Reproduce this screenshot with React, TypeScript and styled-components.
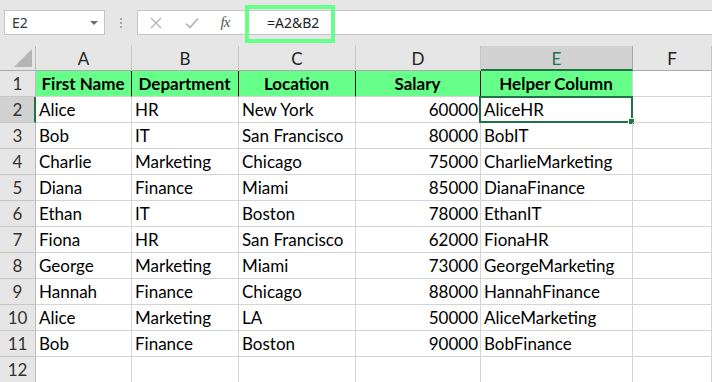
import React from "react";
import styled, { createGlobalStyle, css } from "styled-components";

const Global = createGlobalStyle`
  html, body { margin: 0; padding: 0; background: #ffffff; overflow: hidden; }
  * { box-sizing: border-box; }
`;

const Page = styled.div`
  width: 712px;
  height: 382px;
  display: flex;
  flex-direction: column;
  background: #ffffff;
  overflow: hidden;
`;

const Toolbar = styled.div`
  height: 46px;
  flex: 0 0 46px;
  background: #e6e6e6;
  display: flex;
  align-items: flex-start;
  padding-top: 10px;
  padding-left: 4px;
  font-family: "Noto Sans", "Open Sans", sans-serif;
`;

const NameBox = styled.div`
  width: 101px;
  height: 25px;
  background: #ffffff;
  border: 1px solid #c6c6c6;
  display: flex;
  align-items: center;
  justify-content: space-between;
  padding: 0 6px 0 7px;
  font-size: 14px;
  color: #333;
`;

const Caret = styled.span`
  width: 0;
  height: 0;
  border-left: 4px solid transparent;
  border-right: 4px solid transparent;
  border-top: 4px solid #6b6b6b;
`;

const Grip = styled.div`
  width: 32px;
  height: 25px;
  display: flex;
  flex-direction: column;
  align-items: center;
  justify-content: center;
  gap: 2px;
  span {
    width: 2px;
    height: 2px;
    background: #a8a8a8;
  }
`;

const FormulaBar = styled.div`
  position: relative;
  flex: 1;
  height: 25px;
  background: #ffffff;
  border: 1px solid #c6c6c6;
  border-right: none;
  display: flex;
  align-items: center;
`;

const IconSlot = styled.div`
  width: 36px;
  height: 100%;
  display: flex;
  align-items: center;
  justify-content: center;
`;

const Fx = styled.span`
  font-family: "Liberation Serif", serif;
  font-style: italic;
  font-size: 15px;
  color: #555;
  letter-spacing: -1px;
  margin-left: -6px;
`;

const FormulaText = styled.div`
  padding-left: 21px;
  font-size: 14px;
  color: #222;
`;

const Highlight = styled.div`
  position: absolute;
  left: 107px;
  top: -6px;
  width: 90px;
  height: 38px;
  border: 4px solid #66ff8a;
  pointer-events: none;
`;

const Grid = styled.div`
  display: grid;
  grid-template-columns: 36px 96px 107px 117px 125px 152px 1fr;
  grid-template-rows: 25px repeat(12, 26px);
  font-family: Lato, "Open Sans", sans-serif;
  font-size: 17px;
  color: #000;
`;

const Corner = styled.div`
  background: #e6e6e6;
  border-right: 1px solid #bdbdbd;
  border-bottom: 1px solid #ababab;
  position: relative;
  svg { position: absolute; right: 3px; bottom: 3px; }
`;

const ColHead = styled.div<{ $sel?: boolean }>`
  background: ${(p) => (p.$sel ? "#d2d2d2" : "#e6e6e6")};
  border-right: 1px solid ${(p) => (p.$sel ? "#a6a6a6" : "#c6c6c6")};
  border-bottom: ${(p) => (p.$sel ? "2px solid #217346" : "1px solid #ababab")};
  color: ${(p) => (p.$sel ? "#217346" : "#222")};
  display: flex;
  align-items: center;
  justify-content: center;
  font-size: 17px;
  padding-top: ${(p) => (p.$sel ? "1px" : "0")};
`;

const RowHead = styled.div<{ $sel?: boolean }>`
  background: ${(p) => (p.$sel ? "#d2d2d2" : "#e6e6e6")};
  border-right: ${(p) => (p.$sel ? "2px solid #217346" : "1px solid #bdbdbd")};
  border-bottom: 1px solid #c6c6c6;
  color: #333;
  display: flex;
  align-items: center;
  justify-content: center;
  font-size: 17px;
  padding-left: ${(p) => (p.$sel ? "1px" : "0")};
`;

const Cell = styled.div<{ $head?: boolean; $num?: boolean; $dark?: boolean }>`
  position: relative;
  border-right: 1px solid #d4d4d4;
  border-bottom: 1px solid #d4d4d4;
  display: flex;
  align-items: center;
  padding: 0 4px 0 3px;
  white-space: nowrap;
  ${(p) =>
    p.$num &&
    css`
      justify-content: flex-end;
      padding-right: 2px;
    `}
  ${(p) =>
    p.$head &&
    css`
      background: #66ff8a;
      font-weight: 700;
      justify-content: center;
    `}
  ${(p) =>
    p.$dark &&
    css`
      border-right: 1px solid #111;
    `}
`;

const ActiveFrame = styled.div`
  position: absolute;
  left: -2px;
  top: -1px;
  right: -1px;
  bottom: -1px;
  border: 2px solid #217346;
  pointer-events: none;
  &::after {
    content: "";
    position: absolute;
    right: -4px;
    bottom: -4px;
    width: 5px;
    height: 5px;
    background: #217346;
    border: 1px solid #fff;
    box-sizing: content-box;
  }
`;

const cols = ["A", "B", "C", "D", "E", "F"];
const headers = ["First Name", "Department", "Location", "Salary", "Helper Column"];
const rows: [string, string, string, number][] = [
  ["Alice", "HR", "New York", 60000],
  ["Bob", "IT", "San Francisco", 80000],
  ["Charlie", "Marketing", "Chicago", 75000],
  ["Diana", "Finance", "Miami", 85000],
  ["Ethan", "IT", "Boston", 78000],
  ["Fiona", "HR", "San Francisco", 62000],
  ["George", "Marketing", "Miami", 73000],
  ["Hannah", "Finance", "Chicago", 88000],
  ["Alice", "Marketing", "LA", 50000],
  ["Bob", "Finance", "Boston", 90000],
];

export default function App() {
  return (
    <Page>
      <Global />
      <Toolbar>
        <NameBox>
          <span>E2</span>
          <Caret />
        </NameBox>
        <Grip>
          <span />
          <span />
          <span />
        </Grip>
        <FormulaBar>
          <IconSlot>
            <svg width="12" height="12" viewBox="0 0 12 12">
              <path d="M1 1 L11 11 M11 1 L1 11" stroke="#b3b3b3" strokeWidth="1.3" fill="none" />
            </svg>
          </IconSlot>
          <IconSlot>
            <svg width="14" height="12" viewBox="0 0 14 12">
              <path d="M1 6.5 L5 10.5 L13 1.5" stroke="#b3b3b3" strokeWidth="1.6" fill="none" />
            </svg>
          </IconSlot>
          <IconSlot>
            <Fx>fx</Fx>
          </IconSlot>
          <FormulaText>=A2&amp;B2</FormulaText>
          <Highlight />
        </FormulaBar>
      </Toolbar>
      <Grid>
        <Corner>
          <svg width="18" height="18" viewBox="0 0 18 18">
            <path d="M18 0 L18 18 L0 18 Z" fill="#b5b5b5" />
          </svg>
        </Corner>
        {cols.map((c) => (
          <ColHead key={c} $sel={c === "E"}>
            {c}
          </ColHead>
        ))}
        <RowHead>1</RowHead>
        {headers.map((h, i) => (
          <Cell key={h} $head $dark={i < 4}>
            {h}
          </Cell>
        ))}
        <Cell />
        {rows.map((r, i) => (
          <React.Fragment key={i}>
            <RowHead $sel={i === 0}>{i + 2}</RowHead>
            <Cell>{r[0]}</Cell>
            <Cell>{r[1]}</Cell>
            <Cell>{r[2]}</Cell>
            <Cell $num>{r[3]}</Cell>
            <Cell>
              {r[0] + r[1]}
              {i === 0 && <ActiveFrame />}
            </Cell>
            <Cell />
          </React.Fragment>
        ))}
        <RowHead>12</RowHead>
        {cols.map((c) => (
          <Cell key={"e" + c} />
        ))}
      </Grid>
    </Page>
  );
}
